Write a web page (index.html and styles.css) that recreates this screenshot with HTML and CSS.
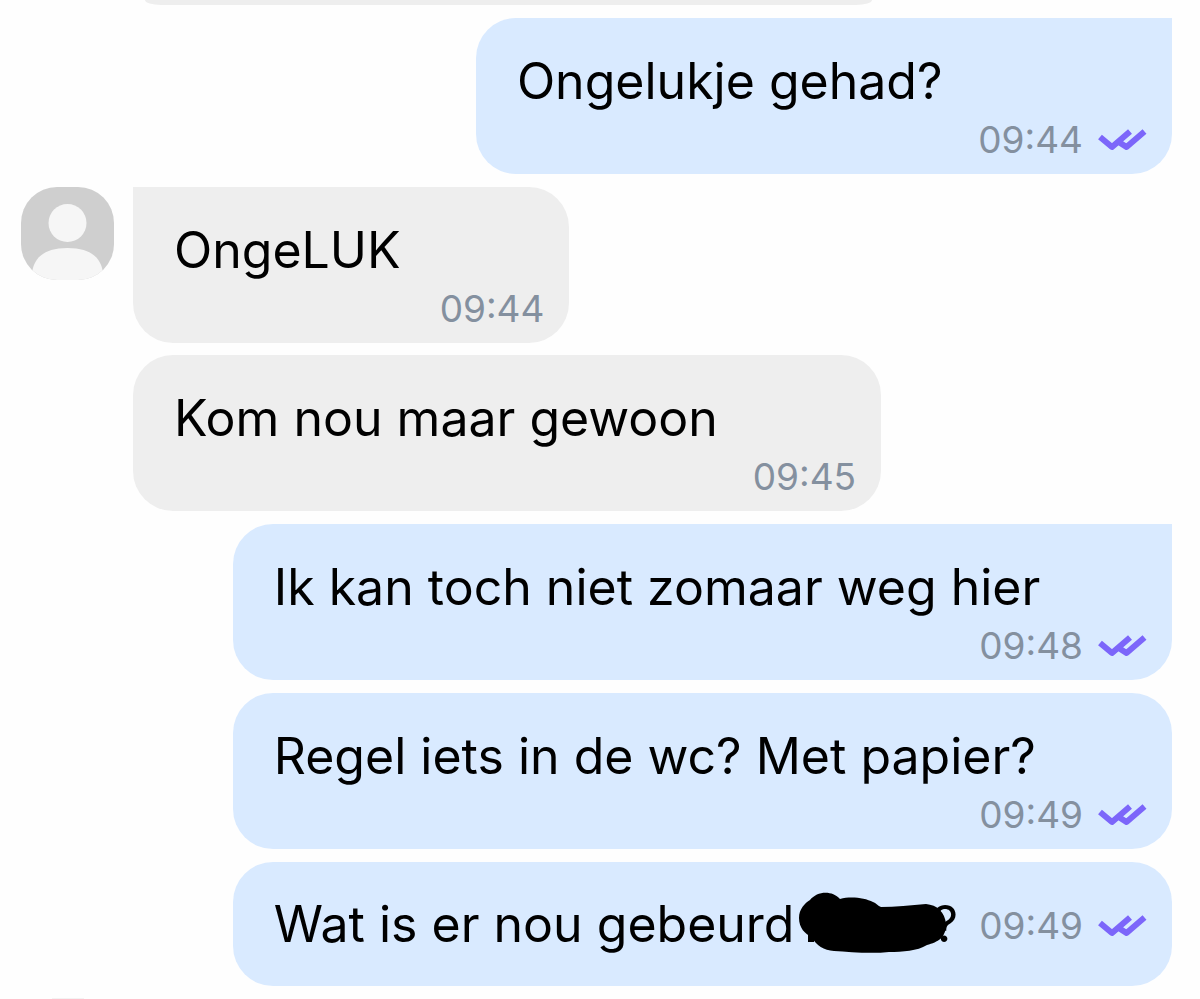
FILE: index.html
```html
<!DOCTYPE html>
<html lang="nl">
<head>
<meta charset="utf-8">
<meta name="viewport" content="width=device-width, initial-scale=1">
<title>Chat</title>
<link rel="stylesheet" href="styles.css">
</head>
<body>
<svg class="defs" aria-hidden="true">
  <symbol id="read" viewBox="0 0 50 24">
    <path d="M3 9 15 19 33 3.500M22.500 14.500 29.500 19 47.500 3.500" fill="none" stroke="#7c66fa" stroke-width="6" stroke-linejoin="round"/>
  </symbol>
</svg>
<main class="thread">
  <div class="bubble in previous"></div>

  <article class="bubble out first medium">
    <p class="text">Ongelukje gehad?</p>
    <footer class="meta"><time>09:44</time><svg class="ticks" role="img" aria-label="Gelezen"><use href="#read"/></svg></footer>
  </article>

  <section class="group">
    <svg class="avatar" viewBox="0 0 93 93" role="img" aria-label="Profielfoto">
      <rect width="93" height="93" fill="#cfcfcf"/>
      <circle cx="46.500" cy="36" r="19" fill="#f6f6f6"/>
      <path d="M11 93V86C13 70 24 61 46.500 61S80 70 82 86V93Z" fill="#f6f6f6"/>
    </svg>
    <div class="stack">
      <article class="bubble in first small">
        <p class="text">OngeLUK</p>
        <footer class="meta"><time>09:44</time></footer>
      </article>
      <article class="bubble in large">
        <p class="text">Kom nou maar gewoon</p>
        <footer class="meta"><time>09:45</time></footer>
      </article>
    </div>
  </section>

  <article class="bubble out first wide">
    <p class="text">Ik kan toch niet zomaar weg hier</p>
    <footer class="meta"><time>09:48</time><svg class="ticks" role="img" aria-label="Gelezen"><use href="#read"/></svg></footer>
  </article>
  <article class="bubble out wide">
    <p class="text">Regel iets in de wc? Met papier?</p>
    <footer class="meta"><time>09:49</time><svg class="ticks" role="img" aria-label="Gelezen"><use href="#read"/></svg></footer>
  </article>
  <article class="bubble out wide inline">
    <p class="text">Wat is er nou gebeurd <span class="hidden-name"><svg class="scribble" viewBox="0 0 150 64" role="img" aria-label="Onleesbaar gemaakt">
      <path d="M10 35H16V51H10Z"/>
      <path d="M1 27C1 18 7 12 12 9C19 0 34-1 42 8C53 5 67 7 75 11C78 12 80 15 83 16C97 16 113 14 128 13C139 14 147 21 148 33C148 47 140 51 129 54C119 60 105 61 91 61C73 63 52 61 36 60C26 59 18 55 14 46C7 43 1 37 1 27Z"/>
    </svg></span>?</p>
    <footer class="meta"><time>09:49</time><svg class="ticks" role="img" aria-label="Gelezen"><use href="#read"/></svg></footer>
  </article>
  <div class="next"></div>
</main>
</body>
</html>
```
FILE: styles.css
```css
* {
  box-sizing: border-box;
}

body {
  margin: 0;
  background: #fefefe;
  color: #000;
  font-family: Inter, "Liberation Sans", sans-serif;
}

.defs {
  position: absolute;
  width: 0;
  height: 0;
}

.thread {
  display: flex;
  flex-direction: column;
  gap: 13px;
  padding: 0 28px 0 133px;
}

.bubble {
  display: flex;
  flex-direction: column;
  border-radius: 40px;
  padding: 31px 25px 9px 41px;
}

.in {
  align-self: flex-start;
  background: #eee;
}

.in.first {
  border-top-left-radius: 0;
}

.out {
  align-self: flex-end;
  background: #d9eaff;
}

.out.first {
  border-top-right-radius: 0;
}

.previous {
  width: 70%;
  height: 5px;
  margin-left: 12px;
  padding: 0;
  border-radius: 0 0 16px 16px / 0 0 5px 5px;
}

.small {
  width: 42%;
}

.medium {
  width: 67%;
}

.large {
  width: 72%;
}

.wide {
  width: 90.4%;
}

.text {
  margin: 0;
  font-size: 50px;
  line-height: 64px;
  white-space: nowrap;
}

.meta {
  display: flex;
  align-items: center;
  justify-content: flex-end;
  gap: 14px;
  padding-top: 2px;
  color: #84909f;
  font-size: 37px;
  line-height: 50px;
}

.ticks {
  width: 50px;
  height: 24px;
}

.group {
  display: flex;
  gap: 19px;
  margin-left: -112px;
}

.avatar {
  flex: none;
  width: 93px;
  height: 93px;
  border-radius: 36px;
}

.stack {
  display: flex;
  flex: 1;
  flex-direction: column;
  gap: 12px;
}

.inline {
  flex-direction: row;
  align-items: center;
  justify-content: space-between;
  padding-top: 30px;
  padding-bottom: 30px;
}

.inline .meta {
  padding-top: 4px;
}

.hidden-name {
  position: relative;
  display: inline-block;
  width: 124px;
}

.scribble {
  position: absolute;
  left: -11px;
  bottom: -13px;
  width: 150px;
  height: 64px;
}

.next {
  width: 32px;
  height: 1px;
  margin: -1px 0 0 -81px;
  background: #f3f3f3;
}
```
